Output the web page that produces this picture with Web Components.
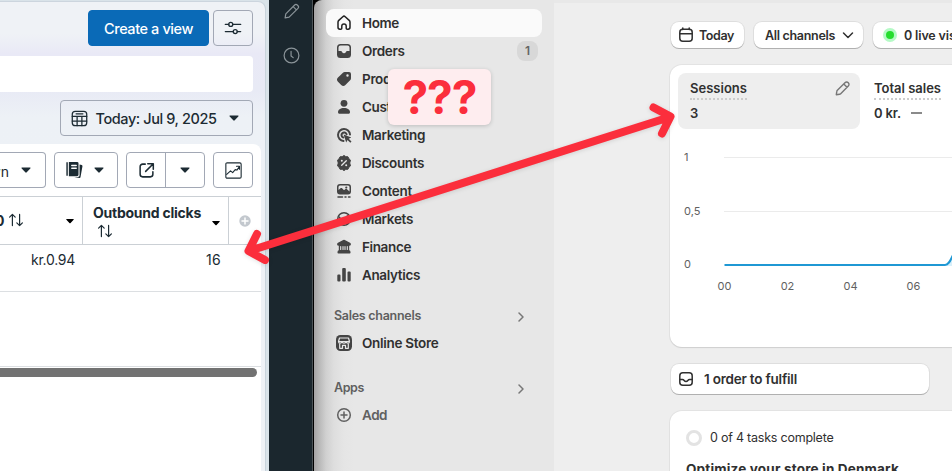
<!DOCTYPE html>
<html lang="en">
<head>
<meta charset="utf-8">
<title>Reports</title>
<style>
  html, body { margin: 0; height: 100%; }
  body {
    width: 952px;
    height: 471px;
    overflow: hidden;
    display: flex;
    position: relative;
    background: #000;
    font-family: Inter, "Liberation Sans", sans-serif;
    color: #303030;
  }
</style>
</head>
<body>
<ads-panel></ads-panel>
<side-rail></side-rail>
<store-admin></store-admin>
<arrow-overlay></arrow-overlay>
<question-note>???</question-note>

<script>
const ICONS = {
  sliders: `<path d="M1.500 6h3.700M9.800 6H18.500M1.500 14h8.700M14.800 14H18.500"/><circle cx="7.500" cy="6" r="2.200"/><circle cx="12.500" cy="14" r="2.200"/>`,
  calendarGrid: `<rect x="1.500" y="1.500" width="17" height="17" rx="3.500"/><path d="M1.500 7.500h17M1.500 13h17M7.200 7.500v11M12.800 7.500v11M6 4.500h8"/>`,
  columns: `<path class="f" d="M1.500 1.500h1.600v15H1.500zM4.300 1h9.100a1.600 1.600 0 0 1 1.600 1.600v12.800a1.600 1.600 0 0 1-1.600 1.600H4.300z"/><path class="f" d="M16.200 4l2.400.5c.6.2.9.6.8 1.200L17.200 18c-.1.700-.6 1-1.200.9l-5.600-1h3.800a2 2 0 0 0 2-2z"/><path class="w" d="M7.500 5h5M7.500 8h5"/>`,
  external: `<path d="M8.500 2.500h-3a3 3 0 0 0-3 3v9a3 3 0 0 0 3 3h9a3 3 0 0 0 3-3v-3M11.500 2h6.500v6.500M18 2l-9 9"/>`,
  chartUp: `<rect x="1" y="1" width="18" height="18" rx="1.500"/><path d="M2 14.500l4.500-4 2.500 2 3-3.500 2 .5 3-4M13.500 5H17v3.500"/>`,
  sort: `<path d="M5.500 17V3M2 6.500L5.500 3 9 6.500M14.500 3v14M11 13.500l3.500 3.500 3.500-3.500"/>`,
  plusDot: `<circle class="f" cx="10" cy="10" r="9.500"/><path class="w" d="M10 5v10M5 10h10"/>`,
  pencil: `<path d="M2.500 17.500l.8-4.700L13.700 2.400a2.200 2.200 0 0 1 3.100 0l.8.8a2.200 2.200 0 0 1 0 3.100L7.200 16.700zM12 4.200L15.800 8"/>`,
  pencilRound: `<path d="M3.500 16.500l.5-3.400a2 2 0 0 1 .6-1.200l8-8a2.400 2.400 0 0 1 3.500 3.500l-8 8a2 2 0 0 1-1.200.6zM11.300 5.200l3.500 3.500"/>`,
  clock: `<circle cx="10" cy="10" r="8.700"/><path d="M9.500 5v5.500l2.500 2"/>`,
  home: `<path d="M4 9.200c0-.7.3-1.300.8-1.800l4-3.700a1.750 1.750 0 0 1 2.400 0l4 3.700c.5.5.8 1.100.8 1.800v5.100a1.900 1.900 0 0 1-1.900 1.900h-.9a1 1 0 0 1-1-1v-2.100a2.200 2.200 0 0 0-4.400 0v2.100a1 1 0 0 1-1 1h-.9A1.900 1.900 0 0 1 4 14.300z"/>`,
  orders: `<path class="e" d="M6.500 3h7A3.500 3.500 0 0 1 17 6.500v7a3.500 3.500 0 0 1-3.500 3.500h-7A3.500 3.500 0 0 1 3 13.500v-7A3.500 3.500 0 0 1 6.500 3zM4.500 6.500V10h2.200c1.700 0 1.300 2.300 3.300 2.300s1.600-2.300 3.300-2.300h2.200V6.500a2 2 0 0 0-2-2h-7a2 2 0 0 0-2 2z"/>`,
  inbox: `<rect x="3.800" y="3.800" width="12.400" height="12.400" rx="3"/><path d="M4 10.500h2.500c1.800 0 1.500 2 3.500 2s1.700-2 3.500-2H16"/>`,
  products: `<path class="e" d="M10.800 3h4.200a2 2 0 0 1 2 2v4.200a3 3 0 0 1-.9 2.100l-4.700 4.700a3 3 0 0 1-4.200 0L4 12.800a3 3 0 0 1 0-4.200l4.700-4.700A3 3 0 0 1 10.800 3zM13.500 5.300a1.200 1.200 0 1 0 0 2.400 1.200 1.200 0 0 0 0-2.400z"/>`,
  person: `<circle class="f" cx="10" cy="6.300" r="3.400"/><path class="f" d="M4 15.200c0-2.500 2.400-4.200 6-4.200s6 1.700 6 4.200c0 .9-.6 1.500-1.500 1.500h-9c-.9 0-1.500-.6-1.500-1.500z"/>`,
  marketing: `<g stroke-width="2"><path d="M9.500 16A6 6 0 1 1 16 9.500"/><path d="M9.300 12.500A2.600 2.600 0 1 1 12.600 9.300"/></g><path class="f" d="M9.600 9.600l7.700 2.800-2.600 1.400 2.800 2.800-1.200 1.200-2.800-2.800-1.300 2.500z"/>`,
  discount: `<path class="f" stroke-linejoin="round" d="M8.700 3.200a1.800 1.800 0 0 1 2.600 0l.5.500.7-.1a1.800 1.800 0 0 1 2.100 1.500l.1.700.7.300a1.800 1.800 0 0 1 .8 2.500L15.900 9.300v1.400l.3.700a1.800 1.800 0 0 1-.8 2.500l-.7.300-.1.700a1.800 1.800 0 0 1-2.100 1.500l-.7-.1-.5.500a1.800 1.800 0 0 1-2.600 0l-.5-.5-.7.100a1.800 1.800 0 0 1-2.100-1.500l-.1-.7-.7-.3a1.800 1.800 0 0 1-.8-2.500l.3-.7V9.300l-.3-.7a1.800 1.800 0 0 1 .8-2.500l.7-.3.1-.7a1.800 1.800 0 0 1 2.100-1.500l.7.100z" style="stroke:currentColor;stroke-width:1"/><path class="w" stroke-width="1.300" d="M7.700 12.300l4.600-4.600"/><circle class="fw" cx="7.800" cy="7.800" r="1"/><circle class="fw" cx="12.200" cy="12.200" r="1"/>`,
  content: `<path class="e" d="M6 3h8a3 3 0 0 1 3 3v4.500a3 3 0 0 1-3 3H6a3 3 0 0 1-3-3V6a3 3 0 0 1 3-3zM4.500 9l2-1.700c.6-.5 1.300-.4 1.800.1l1.700 1.800 1.200-1c.6-.5 1.300-.5 1.800 0l2.500 2.200V6a1.500 1.500 0 0 0-1.500-1.500H6A1.500 1.500 0 0 0 4.500 6z"/><circle class="f" cx="12.300" cy="6.500" r="1.100"/><path d="M4 16h4.500M11 16h1M14.500 16h1.500"/>`,
  globe: `<circle cx="10" cy="10" r="6.300"/><path class="f" d="M10 12.500l3-6.500c1.500.3 3.500 2 3.500 4.500s-1.500 4.500-3.500 5.500zM5 7l3 3-1 3-2.500-1z"/>`,
  bank: `<path class="f" d="M9.200 3a1.800 1.800 0 0 1 1.600 0l5.200 2.700c1.500.8 1.200 3.100-.8 3.100v4.500a1.800 1.800 0 0 1 1.300 1.700v.8c0 .5-.3.8-.8.8H4.300c-.5 0-.8-.3-.8-.8V15a1.800 1.800 0 0 1 1.300-1.700V8.800C2.800 8.800 2.500 6.500 4 5.700z"/><path class="w" stroke-width="1.100" d="M6.700 9.500v3M9 9.500v3M11 9.500v3M13.300 9.500v3"/>`,
  bars: `<path class="f" d="M3.300 10.500a1 1 0 0 1 1-1h1.200a1 1 0 0 1 1 1v5a1 1 0 0 1-1 1H4.300a1 1 0 0 1-1-1zM8.200 4a1 1 0 0 1 1-1h1.600a1 1 0 0 1 1 1v11.500a1 1 0 0 1-1 1H9.200a1 1 0 0 1-1-1zM13.500 7.500a1 1 0 0 1 1-1h1.200a1 1 0 0 1 1 1v8a1 1 0 0 1-1 1h-1.200a1 1 0 0 1-1-1z"/>`,
  store: `<rect class="f" x="2" y="2" width="16" height="16" rx="4.500"/><path class="w" stroke-width="1.200" d="M5.500 5h9l1 3.500h-11zM4.500 8.500c0 2.200 3 2.200 3.500 0 .3 2.200 3.700 2.200 4 0 .5 2.200 3.500 2.200 3.500 0M5.700 11v4.300h2.800v-3h3v3h2.800V11"/>`,
  chevron: `<path d="M8 6l4 4-4 4"/>`,
  chevronDown: `<path d="M5.500 8l4.500 4.500L14.500 8"/>`,
  add: `<circle cx="10" cy="10" r="6.300"/><path d="M10 7v6M7 10h6"/>`,
  calendar: `<rect x="3.800" y="4.300" width="12.400" height="12" rx="3"/><path d="M4 8.700h12M6.800 3v1.500M13.200 3v1.500"/>`,
  caret: `<path class="f" d="M3.500 6h13c1 0 1.300 1 .7 1.600l-6 6.300c-.7.700-1.700.7-2.400 0l-6-6.300C2.200 7 2.500 6 3.500 6z"/>`
};

class UiIcon extends HTMLElement {
  connectedCallback() {
    const size = this.getAttribute("size") || 20;
    const line = this.getAttribute("line") || 1.5;
    this.attachShadow({ mode: "open" });
    this.shadowRoot.innerHTML = `
    <style>
      :host { display: block; flex: none; width: ${size}px; height: ${size}px; }
      svg { display: block; fill: none; stroke: currentColor; stroke-linecap: round; stroke-linejoin: round; }
      .f, .e { fill: currentColor; stroke: none; fill-rule: evenodd; }
      .w { stroke: var(--icon-back, #fff); }
      .fw { fill: var(--icon-back, #fff); stroke: none; }
    </style>
    <svg width="${size}" height="${size}" viewBox="0 0 20 20" stroke-width="${line}">${ICONS[this.getAttribute("name")]}</svg>`;
  }
}
customElements.define("ui-icon", UiIcon);

// One line of text, tracked so that it takes up the width given in "w"
class UiText extends HTMLElement {
  connectedCallback() {
    this.attachShadow({ mode: "open" });
    this.shadowRoot.innerHTML = `
    <style>
      :host { display: block; flex: none; white-space: nowrap; }
      span { display: inline-block; }
    </style>
    <span><slot></slot></span>`;
    const w = Number(this.getAttribute("w"));
    if (!w) return;
    const span = this.shadowRoot.querySelector("span");
    const gap = (w - span.getBoundingClientRect().width) / this.textContent.length;
    span.style.letterSpacing = gap.toFixed(3) + "px";
  }
}
customElements.define("ui-text", UiText);

class AdsButton extends HTMLElement {
  connectedCallback() {
    this.attachShadow({ mode: "open" });
    this.shadowRoot.innerHTML = `
    <style>
      :host {
        display: flex; flex: none; align-items: center; justify-content: center;
        box-sizing: border-box; height: 36px;
        border: 1px solid #a2a8b5; border-radius: 4px;
        color: #1c2b33; font-size: 14px; font-weight: 500;
      }
      :host([primary]) { background: #0a6ab7; border-color: #0a6ab7; color: #fff; }
    </style>
    <slot></slot>`;
  }
}
customElements.define("ads-button", AdsButton);

class AdsPanel extends HTMLElement {
  connectedCallback() {
    this.attachShadow({ mode: "open" });
    this.shadowRoot.innerHTML = `
    <style>
      :host {
        display: block; flex: none; box-sizing: border-box;
        width: 269px; height: 471px; padding-right: 3px; padding-top: 1px;
        background: #d9e3e9; overflow: hidden; color: #1c2b33;
      }
      .page {
        box-sizing: border-box; height: 470px;
        border-top: 1px solid #ccd5de; border-right: 1px solid #c9d4dc;
        border-top-right-radius: 8px; padding-top: 8px;
        background: linear-gradient(#eff2f6 0, #eff2f6 32px, #e9e9f6 52px, #e8eaf5 88px, #edf1f6 115px, #eff2f6 100%);
      }
      .bar { display: flex; gap: 4px; justify-content: flex-end; padding-right: 12px; }
      .search { height: 36px; margin: 10px 12px 8px 0; background: #fff; border-radius: 0 4px 4px 0; }
      .date { width: 193px; gap: 8px; padding-right: 3px; }
      .sheet { height: 327px; margin: 8px 4px 0 0; background: #fff; border-top-right-radius: 8px; }
      .tools { display: flex; gap: 8px; padding: 8px 8px 8px 0; box-sizing: border-box; height: 52px; }
      .cut { width: 46px; border-left: 0; border-radius: 0 4px 4px 0; justify-content: flex-end; padding-right: 13px; gap: 11px; }
      .half { display: flex; width: 38px; height: 34px; align-items: center; justify-content: center; }
      .half + .half { border-left: 1px solid #a2a8b5; }
      .head { display: grid; grid-template-columns: 82px 146px 1fr; height: 47px; border-top: 1px solid #cbd0d5; border-bottom: 1px solid #cbd0d5; }
      .head > div { display: flex; align-items: center; font-weight: 700; font-size: 14px; }
      .head > div + div { border-left: 1px solid #cbd0d5; }
      .cost { justify-content: space-between; padding-right: 7px; }
      .cost > div { display: flex; gap: 4px; align-items: center; margin: -2px 0 0 -5px; }
      .clicks { justify-content: space-between; padding: 1px 7px 0 10px; }
      .clicks ui-icon.s { margin: 2px 0 0 4px; }
      .more { justify-content: center; color: #c3c8ce; }
      .row { display: grid; grid-template-columns: 75px 146px 1fr; height: 47px; border-bottom: 1px solid #dcdfe2; box-sizing: border-box; font-size: 14px; }
      .row ui-text { justify-self: end; margin-top: 6px; line-height: 18px; }
      .blank { height: 75px; border-bottom: 1px solid #dcdfe2; box-sizing: border-box; }
      .thumb { width: 257px; height: 9px; margin-top: 1px; background: #727272; border-radius: 0 5px 5px 0; }
    </style>
    <div class="page">
      <div class="bar">
        <ads-button primary style="width:121px"><ui-text w="89" style="font-size:14.500px;margin-top:1px">Create a view</ui-text></ads-button>
        <ads-button style="width:40px"><ui-icon name="sliders" size="18" line="1.500"></ui-icon></ads-button>
      </div>
      <div class="search"></div>
      <div class="bar">
        <ads-button class="date"><ui-icon name="calendarGrid" size="17" line="1.500"></ui-icon><ui-text w="121" style="font-size:14.500px;margin-top:1px">Today: Jul 9, 2025</ui-text><ui-icon name="caret" size="12" style="margin-left:3px"></ui-icon></ads-button>
      </div>
      <div class="sheet">
        <div class="tools">
          <ads-button class="cut"><ui-text style="font-weight:400;margin-top:2px">wn</ui-text><ui-icon name="caret" size="12"></ui-icon></ads-button>
          <ads-button style="width:64px;gap:10px;padding-right:3px"><ui-icon name="columns" size="18"></ui-icon><ui-icon name="caret" size="12"></ui-icon></ads-button>
          <ads-button style="width:79px">
            <div class="half"><ui-icon name="external" size="17" line="1.800"></ui-icon></div>
            <div class="half"><ui-icon name="caret" size="12"></ui-icon></div>
          </ads-button>
          <ads-button style="width:40px"><ui-icon name="chartUp" size="17" line="1.300"></ui-icon></ads-button>
        </div>
        <div class="head">
          <div class="cost"><div><ui-text style="margin-top:2px">0</ui-text><ui-icon name="sort" size="16"></ui-icon></div><ui-icon name="caret" size="10" style="color:#000"></ui-icon></div>
          <div class="clicks"><div><ui-text w="108">Outbound clicks</ui-text><ui-icon class="s" name="sort" size="16"></ui-icon></div><ui-icon name="caret" size="10" style="color:#000;margin-top:3px"></ui-icon></div>
          <div class="more"><ui-icon name="plusDot" size="12" line="2.500"></ui-icon></div>
        </div>
        <div class="row"><ui-text w="44">kr.0.94</ui-text><ui-text w="15">16</ui-text></div>
        <div class="blank"></div>
        <div class="thumb"></div>
      </div>
    </div>`;
  }
}
customElements.define("ads-panel", AdsPanel);

class SideRail extends HTMLElement {
  connectedCallback() {
    this.attachShadow({ mode: "open" });
    this.shadowRoot.innerHTML = `
    <style>
      :host {
        display: flex; flex: none; flex-direction: column; align-items: center; gap: 27px;
        box-sizing: border-box; width: 44px; padding: 3px 0 0 1px;
        background: #1b272e; border-right: 1px solid #4c5357; color: #8b9499;
      }
    </style>
    <ui-icon name="pencil" size="17" line="1.400"></ui-icon>
    <ui-icon name="clock" size="17" line="1.400"></ui-icon>`;
  }
}
customElements.define("side-rail", SideRail);

class NavItem extends HTMLElement {
  connectedCallback() {
    this.attachShadow({ mode: "open" });
    this.shadowRoot.innerHTML = `
    <style>
      :host {
        display: flex; align-items: center; gap: 8px; box-sizing: border-box;
        height: 28px; padding: 0 4px 0 8px; border-radius: 8px;
        font-size: 13.500px; font-weight: 600; color: #303030; --icon-back: #e7e7e7;
      }
      :host([active]) { background: #fafafa; }
      ui-icon { color: #444; }
      :host([active]) ui-icon { color: #222; }
      :host([muted]), :host([muted]) ui-icon { color: #606060; }
      .count {
        margin-left: auto; width: 21px; height: 20px; border-radius: 8px;
        background: #d8d8d8; color: #666; font-size: 12px; line-height: 20px; text-align: center;
      }
    </style>
    <ui-icon name="${this.getAttribute("icon")}" size="20"></ui-icon>
    <ui-text w="${this.getAttribute("w")}">${this.getAttribute("label")}</ui-text>
    ${this.hasAttribute("count") ? `<div class="count">${this.getAttribute("count")}</div>` : ""}`;
  }
}
customElements.define("nav-item", NavItem);

class StoreNav extends HTMLElement {
  connectedCallback() {
    this.attachShadow({ mode: "open" });
    this.shadowRoot.innerHTML = `
    <style>
      :host {
        display: block; flex: none; box-sizing: border-box; width: 240px; padding: 9px 12px 0;
        background: linear-gradient(90deg, #a5a3a4 0, #bbb 6px, #d0d0d0 12px, #dedede 20px, #e5e5e5 30px, #e7e7e7 40px);
      }
      .group {
        display: flex; align-items: center; justify-content: space-between; height: 27px;
        padding: 0 11px 0 8px; font-size: 12.500px; font-weight: 600; color: #5f5f5f;
      }
      .group ui-icon { color: #777; margin-top: 2px; }
      .channels { margin-top: 13px; }
      .apps { margin-top: 17px; }
    </style>
    <nav-item active icon="home" label="Home" w="37"></nav-item>
    <nav-item icon="orders" label="Orders" w="42.500" count="1"></nav-item>
    <nav-item icon="products" label="Products" w="56"></nav-item>
    <nav-item icon="person" label="Customers" w="68"></nav-item>
    <nav-item icon="marketing" label="Marketing" w="63"></nav-item>
    <nav-item icon="discount" label="Discounts" w="62"></nav-item>
    <nav-item icon="content" label="Content" w="50"></nav-item>
    <nav-item icon="globe" label="Markets" w="51"></nav-item>
    <nav-item icon="bank" label="Finance" w="49"></nav-item>
    <nav-item icon="bars" label="Analytics" w="58"></nav-item>
    <div class="group channels"><ui-text w="87">Sales channels</ui-text><ui-icon name="chevron" size="20"></ui-icon></div>
    <nav-item icon="store" label="Online Store" w="76.500"></nav-item>
    <div class="group apps"><ui-text w="30">Apps</ui-text><ui-icon name="chevron" size="20"></ui-icon></div>
    <nav-item muted icon="add" label="Add" w="25"></nav-item>`;
  }
}
customElements.define("store-nav", StoreNav);

class StorePill extends HTMLElement {
  connectedCallback() {
    this.attachShadow({ mode: "open" });
    this.shadowRoot.innerHTML = `
    <style>
      :host {
        display: flex; flex: none; align-items: center; box-sizing: border-box; height: 26px;
        background: #fff; border-radius: 8px; font-size: 12.500px; font-weight: 600;
        box-shadow: 0 1px 0 #b0b0b0, 0 0 0 1px #dedede;
      }
    </style>
    <slot></slot>`;
  }
}
customElements.define("store-pill", StorePill);

class SessionsChart extends HTMLElement {
  connectedCallback() {
    this.attachShadow({ mode: "open" });
    this.shadowRoot.innerHTML = `
    <style>
      :host { display: block; }
      svg { display: block; }
      text { font-size: 11px; fill: #616161; }
    </style>
    <svg width="282" height="180" viewBox="670 129 282 180">
      <path d="M724 157.500H952M724 211.500H952" stroke="#ebebeb"/>
      <path d="M724.500 264.900H945C949 264.900 950.500 260 953 255V266H945z" fill="#d8effa"/>
      <path d="M724.500 264.900H945C949 264.900 950.500 260 953 255" fill="none" stroke="#1f98d4" stroke-width="2"/>
      <text x="684" y="161">1</text>
      <text x="684" y="215">0,5</text>
      <text x="684" y="268">0</text>
      <g text-anchor="middle">
        <text x="724.500" y="290">00</text>
        <text x="787.500" y="290">02</text>
        <text x="850.500" y="290">04</text>
        <text x="913.500" y="290">06</text>
      </g>
    </svg>`;
  }
}
customElements.define("sessions-chart", SessionsChart);

class StoreMain extends HTMLElement {
  connectedCallback() {
    this.attachShadow({ mode: "open" });
    this.shadowRoot.innerHTML = `
    <style>
      :host {
        display: block; flex: 1; min-width: 0; box-sizing: border-box; padding: 22px 0 0 116px;
        background: linear-gradient(#e8e8e8 3px, #eee 3px);
      }
      .filters { display: flex; gap: 10px; padding-left: 1px; }
      .card {
        box-sizing: border-box; background: #fff; border-radius: 12px 0 0 12px;
        box-shadow: 0 1px 1px #cfcfcf, 0 0 0 1px #e3e3e3;
      }
      .metrics { margin-top: 17px; height: 282px; padding-top: 8px; }
      .tiles { display: flex; padding-left: 8px; }
      .tile { box-sizing: border-box; height: 56px; padding: 7px 8px 0 12px; border-radius: 8px; font-size: 13px; font-weight: 600; }
      .tile.on { display: flex; justify-content: space-between; width: 182px; background: #eee; }
      .tile.on ui-icon { color: #777; margin-top: -1px; }
      .name { line-height: 17px; padding-bottom: 1px; width: max-content; border-bottom: 2px dotted #ccc; }
      .value { line-height: 17px; margin-top: 5px; display: flex; align-items: center; gap: 10px; }
      .value i { width: 11px; height: 2px; margin-top: -1px; background: #8a8a8a; }
      .live { width: 8px; height: 8px; margin: 0 10px 0 13px; border-radius: 50%; background: #26dd2f; box-shadow: 0 0 0 3px #b5fac6; }
      .fulfill { width: 258px; height: 30px; margin: 17px 0 0 1px; padding-left: 5px; gap: 8px; font-size: 13.500px; }
      .setup { margin-top: 17px; height: 100px; border-radius: 12px 0 0 0; padding: 16px 0 0 16px; }
      .progress { display: flex; align-items: center; gap: 8px; font-size: 12.500px; height: 21px; }
      .ring { box-sizing: border-box; width: 16px; height: 16px; border: 3px solid #e3e3e3; border-radius: 50%; }
      .title { margin-top: 12px; line-height: 18px; font-size: 13.500px; font-weight: 700; }
    </style>
    <div class="filters">
      <store-pill style="width:73px;padding-left:5px;gap:3px"><ui-icon name="calendar" size="20"></ui-icon><ui-text w="35">Today</ui-text></store-pill>
      <store-pill style="width:109px;padding-left:11px;gap:3px"><ui-text w="70">All channels</ui-text><ui-icon name="chevronDown" size="20"></ui-icon></store-pill>
      <store-pill style="width:120px"><div class="live"></div><ui-text w="78">0 live visitors</ui-text></store-pill>
    </div>
    <div class="card metrics">
      <div class="tiles">
        <div class="tile on">
          <div>
            <div class="name"><ui-text w="57">Sessions</ui-text></div>
            <div class="value"><ui-text>3</ui-text></div>
          </div>
          <ui-icon name="pencilRound" size="19" line="1.500"></ui-icon>
        </div>
        <div class="tile" style="padding-left:14px">
          <div class="name"><ui-text w="67">Total sales</ui-text></div>
          <div class="value"><ui-text w="27">0 kr.</ui-text><i></i></div>
        </div>
      </div>
      <sessions-chart></sessions-chart>
    </div>
    <store-pill class="fulfill"><ui-icon name="inbox" size="20"></ui-icon><ui-text w="93">1 order to fulfill</ui-text></store-pill>
    <div class="card setup">
      <div class="progress"><div class="ring"></div><ui-text w="123.500">0 of 4 tasks complete</ui-text></div>
      <div class="title"><ui-text w="213">Optimize your store in Denmark</ui-text></div>
    </div>`;
  }
}
customElements.define("store-main", StoreMain);

class StoreAdmin extends HTMLElement {
  connectedCallback() {
    this.attachShadow({ mode: "open" });
    this.shadowRoot.innerHTML = `
    <style>
      :host { display: flex; flex: 1; min-width: 0; margin-left: 1px; overflow: hidden; border-top-left-radius: 8px; }
    </style>
    <store-nav></store-nav>
    <store-main></store-main>`;
  }
}
customElements.define("store-admin", StoreAdmin);

class ArrowOverlay extends HTMLElement {
  connectedCallback() {
    this.attachShadow({ mode: "open" });
    this.shadowRoot.innerHTML = `
    <style>
      :host { position: absolute; inset: 0; filter: drop-shadow(0 1px 2px rgba(0, 0, 0, 0.12)); }
      svg { display: block; fill: none; stroke: #fb2e3c; stroke-width: 8; stroke-linecap: round; stroke-linejoin: round; }
    </style>
    <svg width="952" height="471">
      <path d="M249 251L670 117M257 234L248.500 251L265 260M653.500 107.500L670.500 116.500L662 133.500"/>
    </svg>`;
  }
}
customElements.define("arrow-overlay", ArrowOverlay);

class QuestionNote extends HTMLElement {
  connectedCallback() {
    this.attachShadow({ mode: "open" });
    this.shadowRoot.innerHTML = `
    <style>
      :host {
        position: absolute; left: 388px; top: 69px; width: 103px; height: 56px;
        display: flex; align-items: center; justify-content: center;
        background: #feedef; border-radius: 6px; box-shadow: 0 1px 4px rgba(0, 0, 0, 0.18);
        color: #fb2e3c; font-size: 46px; font-weight: 700; letter-spacing: -1px; line-height: 56px;
      }
    </style>
    <ui-text><slot></slot></ui-text>`;
  }
}
customElements.define("question-note", QuestionNote);
</script>
</body>
</html>
